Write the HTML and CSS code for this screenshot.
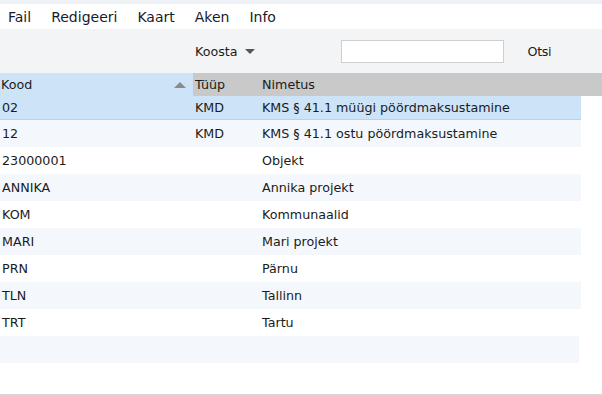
FILE: index.html
```html
<!DOCTYPE html>
<html lang="et">
<head>
  <meta charset="UTF-8" />
  <title>Kaart</title>
  <link rel="stylesheet" href="styles.css">
</head>
<body>
  <div class="window">
    <div class="topstrip"></div>
    <nav class="menubar">
      <span>Fail</span>
      <span>Redigeeri</span>
      <span>Kaart</span>
      <span>Aken</span>
      <span>Info</span>
    </nav>

    <div class="toolbar">
      <span class="dropdown">Koosta <span class="caret"></span></span>
      <input type="text" class="search" />
      <span class="btn">Otsi</span>
    </div>

    <div class="table">
      <div class="head">
        <div class="cell sorted">Kood <span class="sort-up"></span></div>
        <div class="cell">Tüüp</div>
        <div class="cell">Nimetus</div>
      </div>
      <div class="row selected"><div class="cell">02</div><div class="cell">KMD</div><div class="cell">KMS § 41.1 müügi pöördmaksustamine</div></div>
      <div class="row alt"><div class="cell">12</div><div class="cell">KMD</div><div class="cell">KMS § 41.1 ostu pöördmaksustamine</div></div>
      <div class="row"><div class="cell">23000001</div><div class="cell"></div><div class="cell">Objekt</div></div>
      <div class="row alt"><div class="cell">ANNIKA</div><div class="cell"></div><div class="cell">Annika projekt</div></div>
      <div class="row"><div class="cell">KOM</div><div class="cell"></div><div class="cell">Kommunaalid</div></div>
      <div class="row alt"><div class="cell">MARI</div><div class="cell"></div><div class="cell">Mari projekt</div></div>
      <div class="row"><div class="cell">PRN</div><div class="cell"></div><div class="cell">Pärnu</div></div>
      <div class="row alt"><div class="cell">TLN</div><div class="cell"></div><div class="cell">Tallinn</div></div>
      <div class="row"><div class="cell">TRT</div><div class="cell"></div><div class="cell">Tartu</div></div>
      <div class="row alt empty"><div class="cell"></div><div class="cell"></div><div class="cell"></div></div>
    </div>

    <div class="statusline"></div>
  </div>
</body>
</html>
```

FILE: styles.css
```css
html, body { margin: 0; padding: 0; }
body {
  font-family: "DejaVu Sans", sans-serif;
  font-size: 12.7px;
  color: #1b1b1b;
  background: #fff;
}
.window {
  width: 602px;
  height: 396px;
  display: flex;
  flex-direction: column;
  overflow: hidden;
}
.topstrip { height: 4px; background: #eef2f6; }

.menubar {
  height: 25px;
  display: flex;
  align-items: center;
  padding-left: 8px;
  padding-top: 1px;
  box-sizing: border-box;
  font-size: 14px;
  color: #1a1a2a;
}
.menubar span { margin-right: 20px; }

.toolbar {
  height: 44px;
  background: #f3f4f6;
  display: flex;
  align-items: center;
  padding-left: 195px;
  box-sizing: border-box;
}
.dropdown { display: flex; align-items: center; }
.caret {
  display: inline-block;
  margin-left: 7px;
  border-left: 5px solid transparent;
  border-right: 5px solid transparent;
  border-top: 5px solid #555;
}
.search {
  margin-left: 86px;
  width: 163px;
  height: 23px;
  box-sizing: border-box;
  border: 1px solid #cfcfcf;
  background: #fff;
  padding: 0;
}
.btn { margin-left: 24px; letter-spacing: -0.4px; }

.table { display: flex; flex-direction: column; }
.head, .row {
  display: grid;
  grid-template-columns: 193px 67px 1fr;
  align-items: center;
}
.head { height: 23px; background: #c9c9c9; width: 602px; }
.head .sorted {
  background: #cde4f8;
  height: 100%;
  display: flex;
  align-items: center;
  justify-content: space-between;
  padding-left: 1px;
}
.cell { padding-left: 2px; white-space: nowrap; }
.sort-up {
  margin-right: 7px;
  border-left: 6px solid transparent;
  border-right: 6px solid transparent;
  border-bottom: 6px solid #8a8a8a;
}
.row { height: 27px; width: 581px; }
.row.alt { background: #f4f8fd; }
.row.selected {
  height: 24px;
  background: #cde4f8;
  border-bottom: 1px solid #b3d3f0;
  box-sizing: border-box;
}
.row.empty { width: 579px; }

.statusline {
  margin-top: auto;
  height: 2px;
  background: #d6d6d6;
}
```
